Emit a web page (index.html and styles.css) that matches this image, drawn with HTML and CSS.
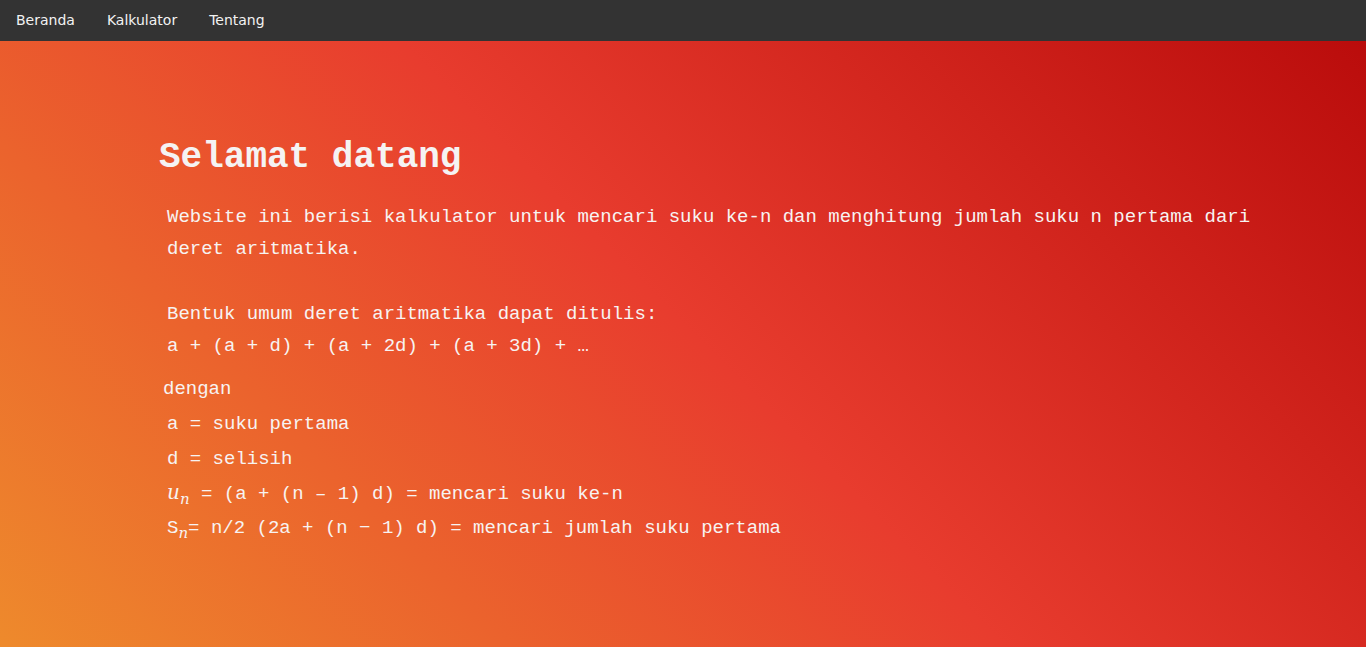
FILE: index.html
```html
<!DOCTYPE html>
<html lang="id">
<head>
<meta charset="utf-8">
<title>Deret Aritmatika</title>
<link rel="stylesheet" href="styles.css">
</head>
<body>
<nav class="topnav">
  <a href="#" class="nav-link">Beranda</a>
  <a href="#" class="nav-link">Kalkulator</a>
  <a href="#" class="nav-link">Tentang</a>
</nav>
<main class="content">
  <h1 class="title">Selamat datang</h1>
  <p class="intro">Website ini berisi kalkulator untuk mencari suku ke-n dan menghitung jumlah suku n pertama dari deret aritmatika.<br><br>Bentuk umum deret aritmatika dapat ditulis:<br>a + (a + d) + (a + 2d) + (a + 3d) + …</p>
  <p class="dengan">dengan</p>
  <ul class="defs">
    <li>a = suku pertama</li>
    <li>d = selisih</li>
    <li><span class="math">u</span><sub class="math-sub">n</sub> = (a + (n – 1) d) = mencari suku ke-n</li>
    <li>S<sub class="math-sub">n</sub>= n/2 (2a + (n − 1) d) = mencari jumlah suku pertama</li>
  </ul>
</main>
</body>
</html>
```
FILE: styles.css
```css
html, body {
  margin: 0;
  padding: 0;
  height: 100%;
}

body {
  background: linear-gradient(45deg, #ee8a2c 0%, #e83c2e 50%, #b80a0a 100%);
  color: #f7f3f2;
  font-family: "Liberation Mono", "Courier New", monospace;
}

.topnav {
  background: #333333;
  height: 41px;
  display: flex;
  align-items: flex-start;
}

.nav-link {
  color: #f2f2f2;
  text-decoration: none;
  font-family: "DejaVu Sans", sans-serif;
  font-size: 14px;
  line-height: 16px;
  padding: 12px 16px 0;
}

.content {
  padding: 96px 70px 0 159px;
}

.title {
  margin: 0;
  font-size: 36px;
  font-weight: bold;
  line-height: normal;
  color: #f5f3f3;
}

.intro {
  margin: 23px 0 0;
  padding-left: 8px;
  font-size: 19px;
  line-height: 1.7;
}

.dengan {
  margin: 10px 0 0;
  padding-left: 4px;
  font-size: 19px;
  line-height: 35px;
}

.defs {
  list-style: none;
  margin: 0;
  padding: 0 0 0 8px;
  font-size: 19px;
  line-height: 34.6px;
}

.math {
  font-family: "DejaVu Serif", serif;
  font-style: italic;
  font-size: 20px;
  line-height: 0;
}

.math-sub {
  font-family: "DejaVu Serif", serif;
  font-style: italic;
  font-size: 15px;
  line-height: 0;
}
```
